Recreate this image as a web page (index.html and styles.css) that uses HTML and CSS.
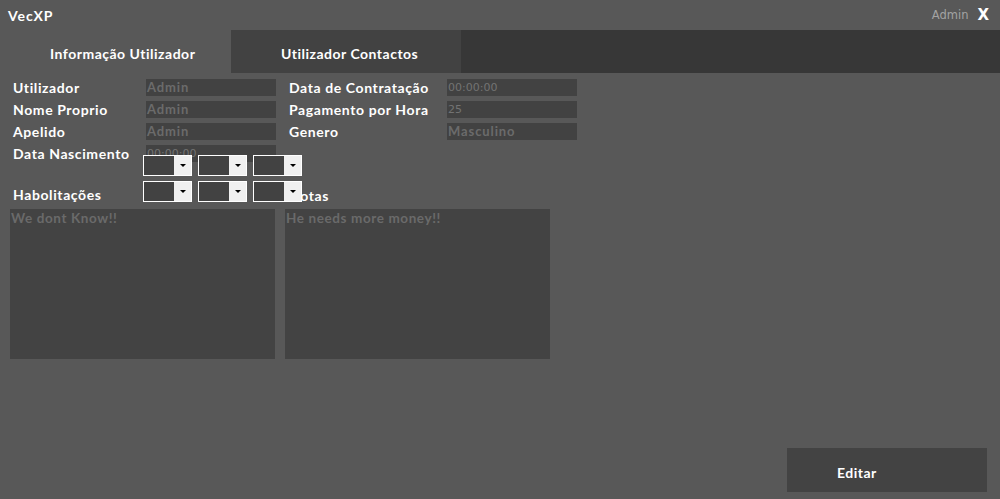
FILE: index.html
```html
<!DOCTYPE html>
<html>
<head>
<meta charset="utf-8">
<link rel="stylesheet" href="styles.css">
</head>
<body>
<div class="app">
  <header class="titlebar">
    <span class="brand">VecXP</span>
    <div class="user">
      <span class="user-name">Admin</span>
      <span class="close">X</span>
    </div>
  </header>
  <nav class="tabs">
    <div class="tab active">Informação Utilizador</div>
    <div class="tab">Utilizador Contactos</div>
  </nav>
  <main class="form">
    <div class="fields">
      <label class="lbl">Utilizador</label>
      <div class="inp">Admin</div>
      <label class="lbl right">Data de Contratação</label>
      <div class="inp thin">00:00:00</div>

      <label class="lbl">Nome Proprio</label>
      <div class="inp">Admin</div>
      <label class="lbl right">Pagamento por Hora</label>
      <div class="inp thin">25</div>

      <label class="lbl">Apelido</label>
      <div class="inp">Admin</div>
      <label class="lbl right">Genero</label>
      <div class="inp">Masculino</div>

      <label class="lbl">Data Nascimento</label>
      <div class="inp thin">00:00:00</div>
    </div>
    <div class="row-labels">
      <label class="lbl hab">Habolitações</label>
      <label class="lbl notas">Notas</label>
    </div>
    <div class="selects sel-a">
      <div class="sel"><span class="sel-val"></span><span class="sel-btn"><i class="arrow"></i></span></div>
      <div class="sel"><span class="sel-val"></span><span class="sel-btn"><i class="arrow"></i></span></div>
      <div class="sel"><span class="sel-val"></span><span class="sel-btn"><i class="arrow"></i></span></div>
    </div>
    <div class="selects sel-b">
      <div class="sel"><span class="sel-val"></span><span class="sel-btn"><i class="arrow"></i></span></div>
      <div class="sel"><span class="sel-val"></span><span class="sel-btn"><i class="arrow"></i></span></div>
      <div class="sel"><span class="sel-val"></span><span class="sel-btn"><i class="arrow"></i></span></div>
    </div>
    <div class="areas">
      <div class="area">We dont Know!!</div>
      <div class="area">He needs more money!!</div>
    </div>
    <div class="actions">
      <button class="btn">Editar</button>
    </div>
  </main>
</div>
</body>
</html>
```

FILE: styles.css
```css
* { box-sizing: border-box; }
html, body { margin: 0; padding: 0; }
body {
  background: #585858;
  font-family: "Lato", "DejaVu Sans", sans-serif;
  color: #ffffff;
}
.app {
  width: 1000px;
  height: 499px;
  display: flex;
  flex-direction: column;
  overflow: hidden;
}
.titlebar {
  height: 30px;
  display: flex;
  align-items: center;
  justify-content: space-between;
  padding: 0 11px 0 8px;
}
.brand {
  font-weight: 700;
  font-size: 14px;
  letter-spacing: 0.9px;
}
.user { display: flex; align-items: center; gap: 9px; }
.user-name {
  font-family: "DejaVu Sans", sans-serif;
  font-size: 11.5px;
  color: #a3a3a3;
}
.close {
  font-family: "DejaVu Sans", sans-serif;
  font-weight: 700;
  font-size: 15px;
}
.tabs {
  height: 43px;
  background: #373737;
  display: flex;
}
.tab {
  width: 230px;
  padding: 15px 0 0 50px;
  font-weight: 700;
  font-size: 14px;
  letter-spacing: 0.5px;
  background: #424242;
}
.tab.active {
  width: 231px;
  background: #585858;
}
.form {
  flex: 1;
  position: relative;
  display: flex;
  flex-direction: column;
}
.fields {
  margin-top: 6px;
  padding-left: 13px;
  display: grid;
  grid-template-columns: 133px 130px 13px 158px 130px;
  grid-auto-rows: 17px;
  row-gap: 5px;
}
.lbl {
  font-weight: 700;
  font-size: 14px;
  letter-spacing: 0.6px;
  line-height: 17px;
  white-space: nowrap;
}
.lbl.right { grid-column: 4; }
.fields .lbl:not(.right) { grid-column: 1; }
.inp {
  background: #424242;
  color: #6b6b6b;
  font-weight: 700;
  font-size: 13px;
  line-height: 17px;
  padding-left: 1px;
  letter-spacing: 0.9px;
}
.inp.thin {
  font-family: "DejaVu Sans", sans-serif;
  font-weight: 400;
  font-size: 11px;
  letter-spacing: 0;
  color: #737373;
}
.row-labels {
  margin-top: 24px;
  height: 17px;
  display: flex;
  padding-left: 13px;
}
.hab { width: 276px; }
.notas { margin-top: 1px; }
.selects {
  position: absolute;
  left: 143px;
  display: flex;
  gap: 6px;
}
.sel-a { top: 82px; }
.sel-b { top: 108px; }
.sel {
  width: 49px;
  height: 21px;
  border: 1px solid #ffffff;
  display: flex;
}
.sel-val { flex: 1; background: #424242; }
.sel-btn {
  width: 17px;
  background: #f0f0f0;
  display: flex;
  align-items: center;
  justify-content: center;
}
.arrow {
  width: 0; height: 0;
  border-left: 3px solid transparent;
  border-right: 3px solid transparent;
  border-top: 3px solid #000;
}
.areas {
  margin-top: 6px;
  padding-left: 10px;
  display: flex;
  gap: 10px;
}
.area {
  width: 265px;
  height: 150px;
  background: #434343;
  color: #6a6a6a;
  font-weight: 700;
  font-size: 13.5px;
  letter-spacing: 0.6px;
  line-height: 17px;
  padding: 1px 1px;
}
.actions {
  margin-top: auto;
  display: flex;
  justify-content: flex-end;
  padding: 0 13px 7px 0;
}
.btn {
  width: 200px;
  height: 44px;
  border: none;
  background: #434343;
  color: #fff;
  font-family: "Lato", sans-serif;
  font-weight: 700;
  font-size: 14px;
  letter-spacing: 0.5px;
  text-align: left;
  padding: 4px 0 0 50px;
}
```
